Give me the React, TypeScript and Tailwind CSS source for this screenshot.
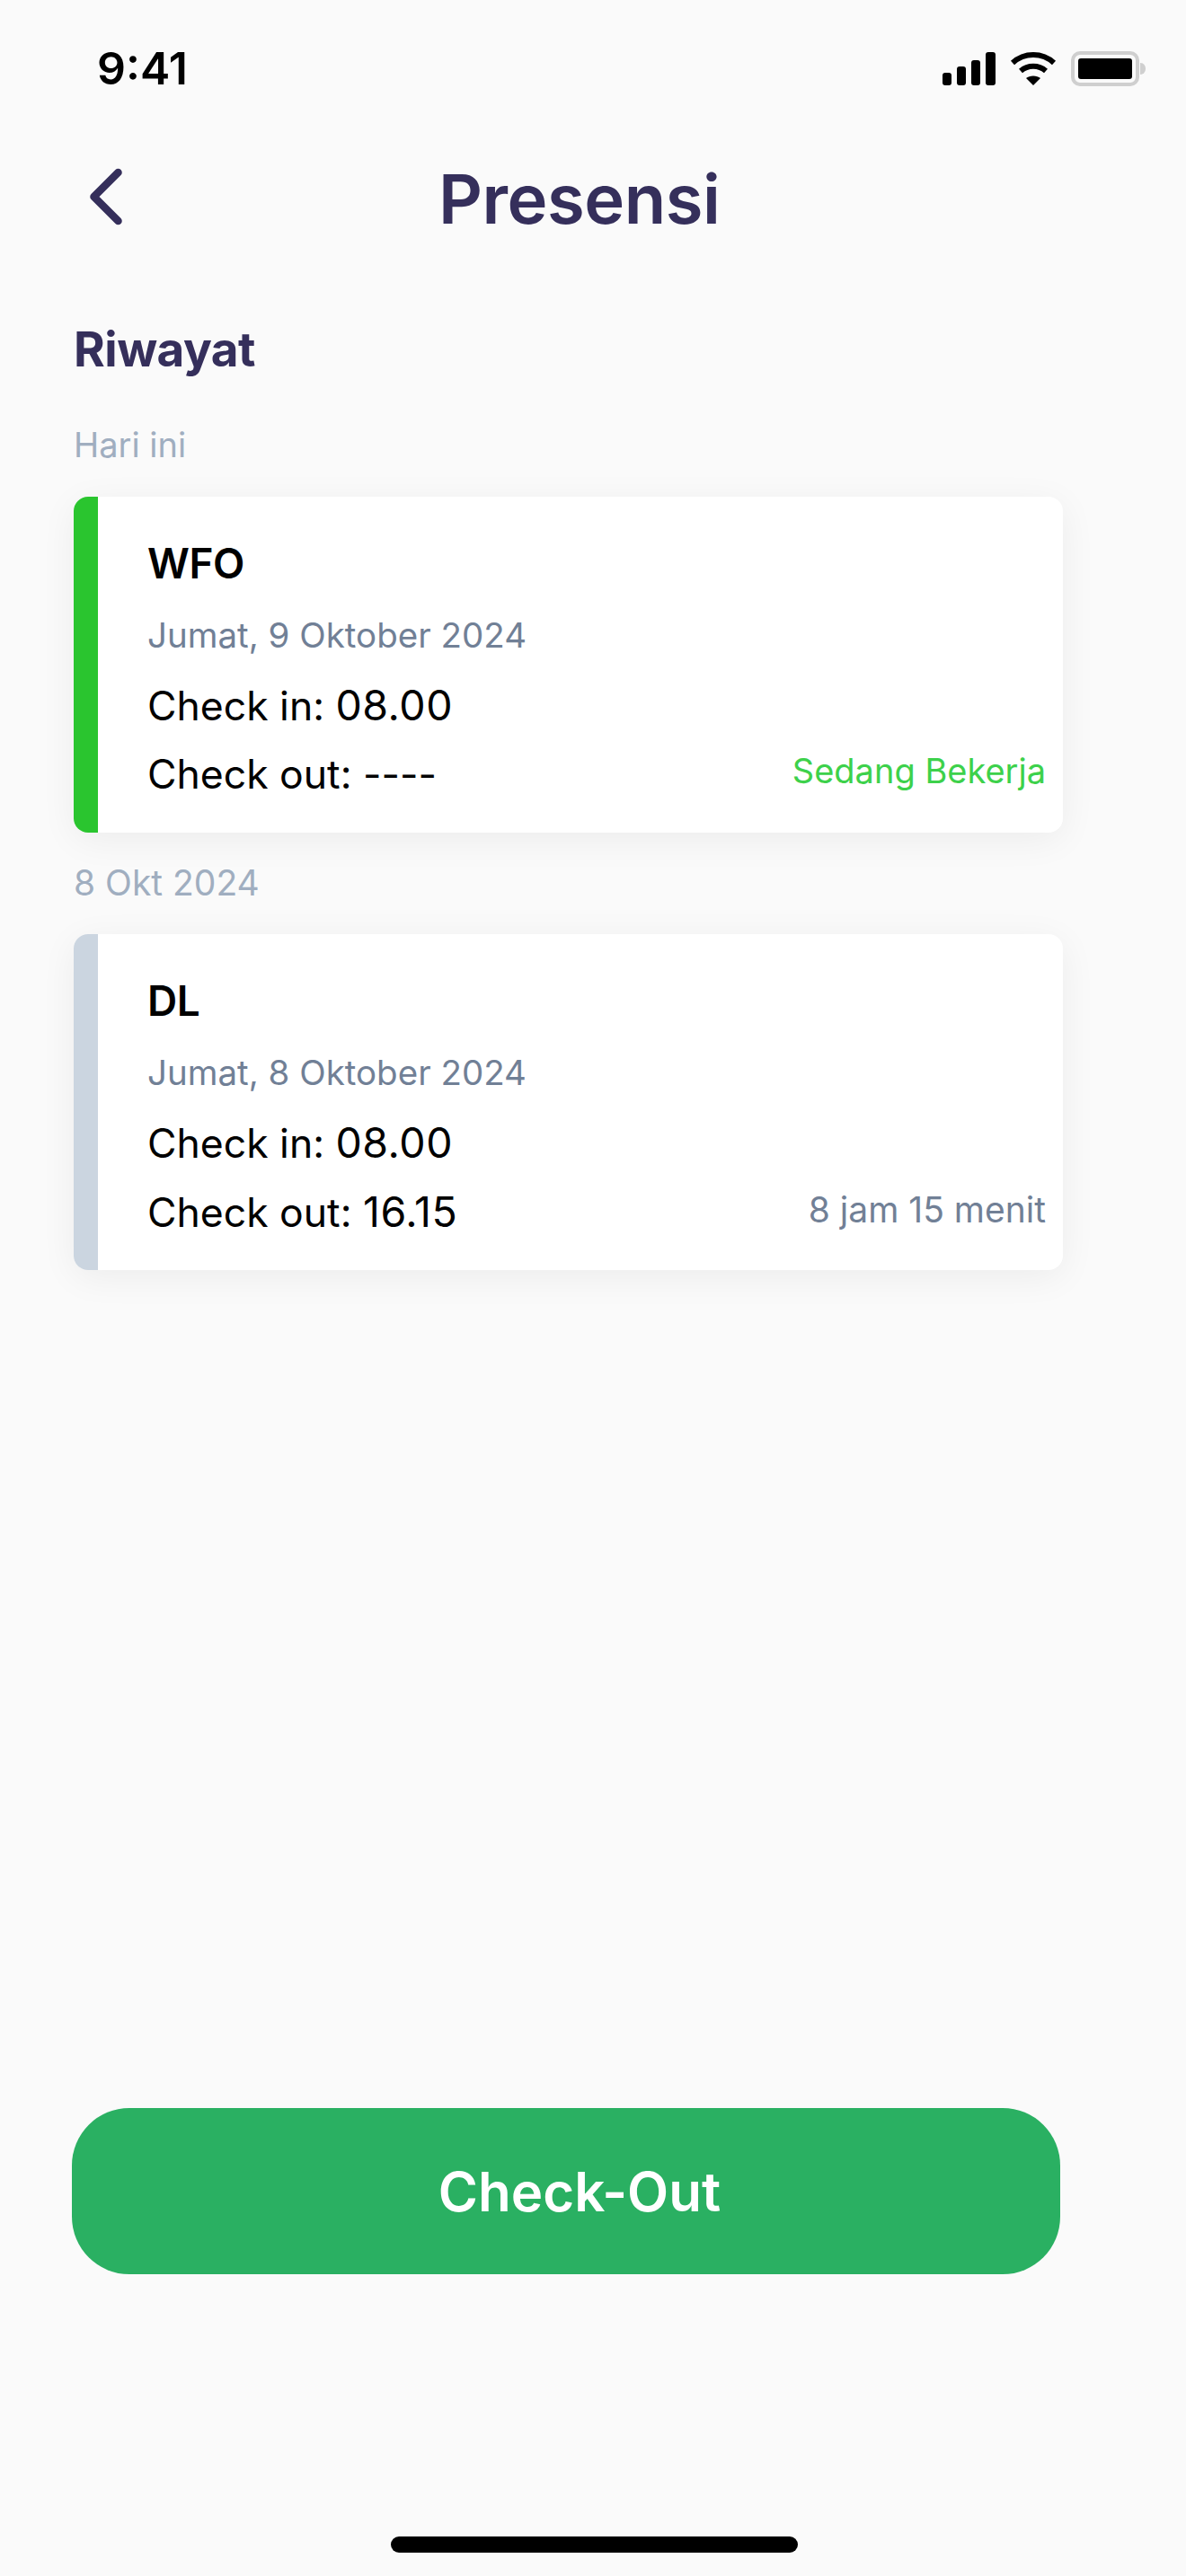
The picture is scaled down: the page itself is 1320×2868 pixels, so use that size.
import type { ReactNode } from "react";
import { ChevronLeft } from "lucide-react";

type CardProps = {
    title: string;
    date: string;
    checkOut: ReactNode;
    note: string;
    barClass: string;
    noteClass: string;
};

function SignalIcon() {
    return (
        <svg width="59" height="37" viewBox="0 0 59 37" fill="#000">
            <rect x="0" y="23" width="10" height="14" rx="3" />
            <rect x="16" y="16" width="10" height="21" rx="3" />
            <rect x="32" y="9" width="10" height="28" rx="3" />
            <rect x="48" y="0" width="11" height="37" rx="3" />
        </svg>
    );
}

function WifiIcon() {
    return (
        <svg width="52" height="39" viewBox="0 0 52 39" fill="none" stroke="#000" strokeWidth="6">
            <path d="M3 13C16 1 36 1 49 13" />
            <path d="M12 22C20 15 32 15 40 22" />
            <path d="M26 38L18 30C22 26.500 30 26.500 34 30Z" fill="#000" stroke="none" />
        </svg>
    );
}

function BatteryIcon() {
    return (
        <div className="flex items-center">
            <div className="flex h-[39px] w-[76px] items-center justify-center rounded-[10px] border-[4px] border-[#cfcfcf]">
                <div className="h-[23px] w-[60px] rounded-[3px] bg-black" />
            </div>
            <div className="ml-[1px] h-[13px] w-[6px] rounded-r-full bg-[#cfcfcf]" />
        </div>
    );
}

function Time({ children }: { children: string }) {
    return <span className="text-[46.500px] tracking-[0.5px]">{children}</span>;
}

function AttendanceCard({ title, date, checkOut, note, barClass, noteClass }: CardProps) {
    return (
        <div className="flex h-[374px] w-[1101px] overflow-hidden rounded-[16px] bg-white shadow-[0_8px_40px_rgba(0,0,0,0.06)]">
            <div className={`w-[27px] shrink-0 ${barClass}`} />
            <div className="flex flex-1 flex-col pl-[55px] pr-[19px] pt-[35px]">
                <p className="text-[46px] font-semibold leading-[78px] tracking-[-0.5px] text-black">{title}</p>
                <p className="mt-[2px] text-[38.500px] leading-[78px] text-[#718096]">{date}</p>
                <p className="text-[44.500px] leading-[78px] text-black">Check in: <Time>08.00</Time></p>
                <div className="-mt-[2px] flex h-[78px] items-center justify-between">
                    <p className="text-[44.500px] leading-[78px] text-black">Check out: {checkOut}</p>
                    <p className={`leading-[78px] ${noteClass}`}>{note}</p>
                </div>
            </div>
        </div>
    );
}

export default function App() {
    return (
        <div className="flex h-[2868px] w-[1320px] flex-col bg-[#fafafa] font-['Inter',sans-serif]">
            <div className="flex h-[154px] items-start justify-between pl-[108px] pr-[45px] pt-[46px]">
                <span className="text-[50px] font-semibold leading-[60px] text-black">9:41</span>
                <div className="flex items-center gap-[16px] pt-[11px]">
                    <SignalIcon />
                    <WifiIcon />
                    <BatteryIcon />
                </div>
            </div>

            <div className="flex h-[134px] items-center">
                <ChevronLeft size={108} strokeWidth={1.900} className="-mt-[5px] ml-[64px] shrink-0 text-[#352f5b]" />
                <h1 className="ml-[316px] text-[76px] font-semibold leading-none tracking-[-0.5px] text-[#352f5b]">Presensi</h1>
            </div>

            <div className="flex flex-1 flex-col pl-[82px]">
                <h2 className="mt-[66px] text-[53px] font-bold leading-[70px] tracking-[-0.5px] text-[#352f5b]">Riwayat</h2>
                <p className="mt-[46px] text-[38px] leading-[50px] text-[#a0aec0]">Hari ini</p>
                <div className="mt-[33px]">
                    <AttendanceCard
                        title="WFO"
                        date="Jumat, 9 Oktober 2024"
                        checkOut="----"
                        note="Sedang Bekerja"
                        barClass="bg-[#2ac52f]"
                        noteClass="-mt-[8px] text-[38px] text-[#3dd14b]"
                    />
                </div>
                <p className="mt-[31px] text-[39px] leading-[50px] text-[#a0aec0]">8 Okt 2024</p>
                <div className="mt-[32px]">
                    <AttendanceCard
                        title="DL"
                        date="Jumat, 8 Oktober 2024"
                        checkOut={<Time>16.15</Time>}
                        note="8 jam 15 menit"
                        barClass="bg-[#cbd5e0]"
                        noteClass="-mt-[4px] text-[39px] text-[#718096]"
                    />
                </div>
            </div>

            <button className="ml-[80px] flex h-[185px] w-[1100px] items-center justify-center rounded-[64px] bg-[#2ab062] pl-[30px] text-[60px] font-semibold text-white">
                Check-Out
            </button>

            <div className="mb-[26px] ml-[435px] mt-[292px] h-[18px] w-[453px] rounded-full bg-black" />
        </div>
    );
}
